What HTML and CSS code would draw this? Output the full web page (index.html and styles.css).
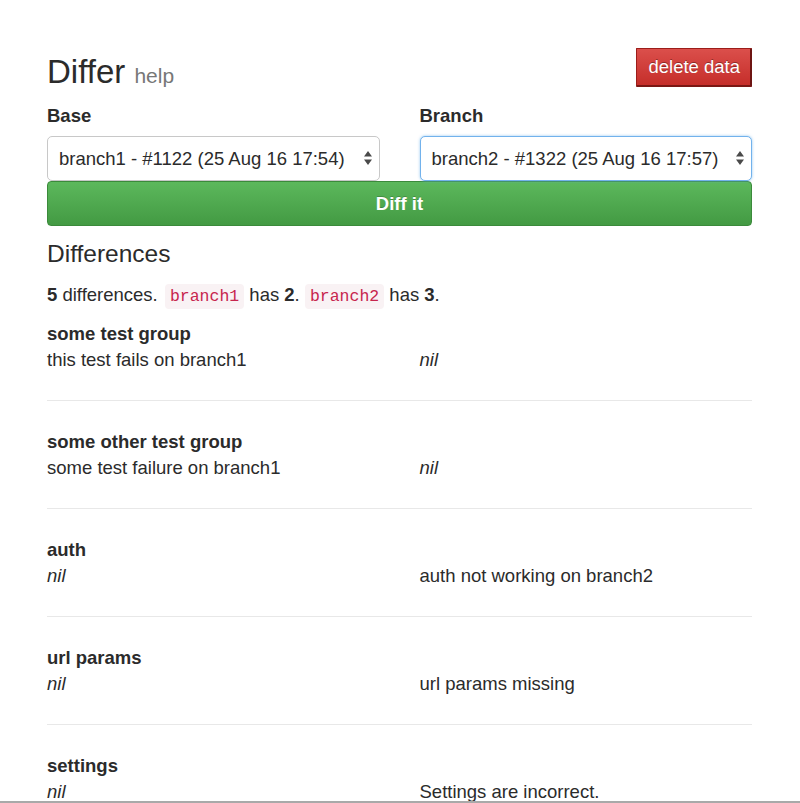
FILE: index.html
```html
<!DOCTYPE html>
<html lang="en">
<head>
<meta charset="utf-8">
<title>Differ</title>
<link rel="stylesheet" href="styles.css">
</head>
<body>
<div class="page">
  <header class="top">
    <h1 class="title">Differ <small class="help">help</small></h1>
    <button class="btn btn-delete" type="button">delete data</button>
  </header>

  <form class="picker">
    <div class="fields">
      <div class="field">
        <label class="label">Base</label>
        <div class="select-wrap">
          <select class="select">
            <option>branch1 - #1122 (25 Aug 16 17:54)</option>
          </select>
          <svg class="arrows" width="10" height="16" viewBox="0 0 10 16"><path d="M5 1 L9 6.5 L1 6.5 Z M5 15 L9 9.5 L1 9.5 Z" fill="#4a4a4a"/></svg>
        </div>
      </div>
      <div class="field">
        <label class="label">Branch</label>
        <div class="select-wrap">
          <select class="select is-focused">
            <option>branch2 - #1322 (25 Aug 16 17:57)</option>
          </select>
          <svg class="arrows" width="10" height="16" viewBox="0 0 10 16"><path d="M5 1 L9 6.5 L1 6.5 Z M5 15 L9 9.5 L1 9.5 Z" fill="#4a4a4a"/></svg>
        </div>
      </div>
    </div>
    <button class="btn btn-diff" type="button">Diff it</button>
  </form>

  <h2 class="section">Differences</h2>
  <p class="summary"><b>5</b> differences. <code class="code">branch1</code> has <b>2</b>. <code class="code">branch2</code> has <b>3</b>.</p>

  <div class="groups">
    <section class="group">
      <h4 class="group-title">some test group</h4>
      <div class="row"><span>this test fails on branch1</span><span class="nil">nil</span></div>
    </section>
    <section class="group">
      <h4 class="group-title">some other test group</h4>
      <div class="row"><span>some test failure on branch1</span><span class="nil">nil</span></div>
    </section>
    <section class="group">
      <h4 class="group-title">auth</h4>
      <div class="row"><span class="nil">nil</span><span>auth not working on branch2</span></div>
    </section>
    <section class="group">
      <h4 class="group-title">url params</h4>
      <div class="row"><span class="nil">nil</span><span>url params missing</span></div>
    </section>
    <section class="group">
      <h4 class="group-title">settings</h4>
      <div class="row"><span class="nil">nil</span><span>Settings are incorrect.</span></div>
    </section>
  </div>
</div>
<div class="window-edge"></div>
</body>
</html>
```

FILE: styles.css
```css
html, body {
  margin: 0;
  padding: 0;
  background: #fff;
}

body {
  font-family: "Liberation Sans", Arial, Helvetica, sans-serif;
  font-size: 18.5px;
  color: #2b2b2b;
}

.page {
  width: 705px;
  padding-left: 47px;
}

.top {
  display: flex;
  justify-content: space-between;
  align-items: flex-start;
  margin-top: 48px;
}

.title {
  margin: 5.5px 0 0;
  font-size: 33px;
  font-weight: normal;
  line-height: 36px;
  color: #2b2b2b;
}

.help {
  font-size: 21px;
  color: #777;
}

.btn {
  font-family: inherit;
  cursor: pointer;
}

.btn-delete {
  height: 39px;
  padding: 0 10px 0 11px;
  font-size: 18.5px;
  line-height: 36px;
  color: #fff;
  background: linear-gradient(#db4f4b, #c52e2a);
  border: 1px solid #9c1d1a;
  border-right: 2px solid #6d1513;
  border-bottom: 2px solid #7a1714;
  border-radius: 1px;
  text-shadow: 0 -1px 0 rgba(0, 0, 0, 0.35);
}

.picker {
  margin: 10.5px 0 0;
}

.fields {
  display: grid;
  grid-template-columns: 1fr 1fr;
  column-gap: 40px;
}

.label {
  display: block;
  font-weight: bold;
  line-height: 24px;
  margin-bottom: 8px;
}

.select-wrap {
  position: relative;
}

.select {
  display: block;
  width: 100%;
  height: 45px;
  box-sizing: border-box;
  padding: 0 30px 0 11px;
  font-family: inherit;
  font-size: 18.5px;
  color: #2b2b2b;
  background: #fff;
  border: 1px solid #c8c8c8;
  border-radius: 5px;
  appearance: none;
  -webkit-appearance: none;
  outline: none;
}

.select.is-focused {
  border-color: #72b2ec;
  box-shadow: 0 0 3px rgba(102, 175, 233, 0.7);
}

.arrows {
  position: absolute;
  right: 7px;
  top: 14px;
  pointer-events: none;
}

.btn-diff {
  display: block;
  width: 100%;
  height: 45px;
  margin-top: 0;
  font-size: 18.5px;
  font-weight: bold;
  color: #fff;
  background: linear-gradient(#5cb85c, #439a43);
  border: 1px solid #3b8a3b;
  border-radius: 4px;
  text-shadow: 0 -1px 0 rgba(0, 0, 0, 0.2);
}

.section {
  margin: 12.5px 0 0;
  font-size: 24.5px;
  font-weight: normal;
  line-height: 30px;
  color: #2b2b2b;
}

.summary {
  margin: 13px 0 0;
  line-height: 26px;
}

.code {
  font-family: "Liberation Mono", "Courier New", monospace;
  font-size: 16.5px;
  color: #c7254e;
  background: #f9f2f4;
  border-radius: 4px;
  padding: 3px 5px;
}

.summary .code:first-of-type {
  margin-left: 2px;
}

.groups {
  margin-top: 11px;
}

.group {
  padding-bottom: 27px;
  margin-bottom: 28px;
  border-bottom: 1px solid #e8e8e8;
}

.group-title {
  margin: 0;
  font-size: 18.5px;
  font-weight: bold;
  line-height: 26px;
}

.row {
  display: grid;
  grid-template-columns: 1fr 1fr;
  column-gap: 40px;
  line-height: 26px;
}

.nil {
  font-style: italic;
}

.window-edge {
  position: fixed;
  left: 0;
  right: 0;
  bottom: 0;
  height: 2px;
  background: #a9a9a9;
}
```
